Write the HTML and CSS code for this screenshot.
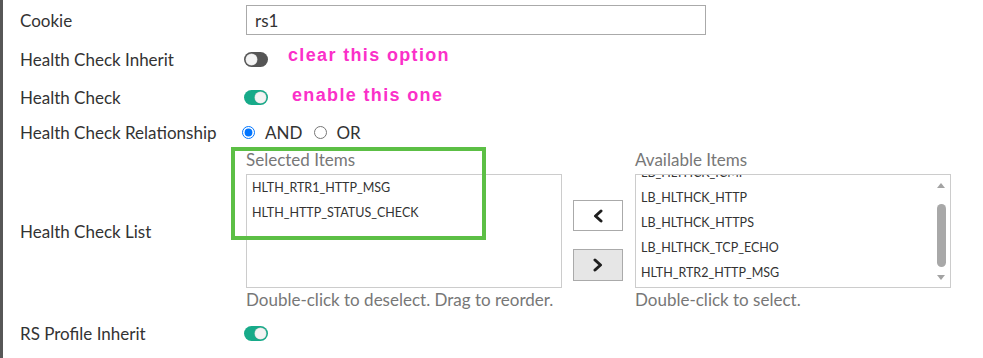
FILE: index.html
```html
<!DOCTYPE html>
<html>
<head>
<meta charset="utf-8">
<link rel="stylesheet" href="styles.css">
</head>
<body>
<div class="page">
  <div class="row row-cookie">
    <div class="label">Cookie</div>
    <div class="field"><input class="text-input" type="text" value="rs1"></div>
  </div>
  <div class="row row-toggle">
    <div class="label">Health Check Inherit</div>
    <div class="field"><span class="toggle"><span class="knob"></span></span></div>
  </div>
  <div class="row row-toggle">
    <div class="label">Health Check</div>
    <div class="field"><span class="toggle on"><span class="knob"></span></span></div>
  </div>
  <div class="row row-rel">
    <div class="label">Health Check Relationship</div>
    <div class="field radios">
      <label class="radio"><input type="radio" name="rel" checked><span>AND</span></label>
      <label class="radio"><input type="radio" name="rel"><span>OR</span></label>
    </div>
  </div>
  <div class="row row-list">
    <div class="label">Health Check List</div>
    <div class="field lists">
      <div class="list-col">
        <div class="list-head">Selected Items</div>
        <div class="list-box">
          <div class="items">
            <div class="item">HLTH_RTR1_HTTP_MSG</div>
            <div class="item">HLTH_HTTP_STATUS_CHECK</div>
          </div>
        </div>
        <div class="list-hint">Double-click to deselect. Drag to reorder.</div>
      </div>
      <div class="move-btns">
        <button class="move-btn" type="button"><svg width="12" height="14" viewBox="0 0 12 14"><polyline points="9,2 3.5,7 9,12" fill="none" stroke="#1e1e1e" stroke-width="3" stroke-linecap="round" stroke-linejoin="round"/></svg></button>
        <button class="move-btn alt" type="button"><svg width="12" height="14" viewBox="0 0 12 14"><polyline points="3,2 8.5,7 3,12" fill="none" stroke="#1e1e1e" stroke-width="3" stroke-linecap="round" stroke-linejoin="round"/></svg></button>
      </div>
      <div class="list-col">
        <div class="list-head">Available Items</div>
        <div class="list-box scrolling">
          <div class="items scrolled">
            <div class="item">LB_HLTHCK_ICMP</div>
            <div class="item">LB_HLTHCK_HTTP</div>
            <div class="item">LB_HLTHCK_HTTPS</div>
            <div class="item">LB_HLTHCK_TCP_ECHO</div>
            <div class="item">HLTH_RTR2_HTTP_MSG</div>
          </div>
          <div class="scrollbar">
            <span class="arrow up"></span>
            <span class="thumb"></span>
            <span class="arrow down"></span>
          </div>
        </div>
        <div class="list-hint">Double-click to select.</div>
      </div>
    </div>
  </div>
  <div class="row row-last">
    <div class="label">RS Profile Inherit</div>
    <div class="field"><span class="toggle on"><span class="knob"></span></span></div>
  </div>

  <div class="note note-clear">clear this option</div>
  <div class="note note-enable">enable this one</div>
  <div class="highlight"></div>
</div>
</body>
</html>
```

FILE: styles.css
```css
* { box-sizing: border-box; }
html, body { margin: 0; padding: 0; background: #fff; }
body {
  font-family: Lato, "Open Sans", "Liberation Sans", sans-serif;
  font-size: 17px;
  color: #333;
}
.page {
  position: relative;
  width: 983px;
  height: 358px;
  border-left: 3px solid #575757;
  padding-left: 17px;
  overflow: hidden;
}
.row { display: flex; align-items: center; }
.label { width: 226px; flex: none; }
.field { display: flex; align-items: center; }

.row-cookie { height: 40px; }
.row-toggle { height: 38px; }
.row-rel { height: 32px; }
.row-list { height: 164px; padding-top: 2px; }
.row-last { height: 42px; }

.text-input {
  width: 460px;
  height: 30px;
  border: 1px solid #aaa;
  padding: 0 8px;
  font-family: Lato, sans-serif;
  font-size: 17px;
  color: #333;
  outline: none;
}

.toggle {
  display: inline-flex;
  align-items: center;
  width: 24px;
  height: 15px;
  border-radius: 8px;
  background: #555;
  padding: 0 2px;
  margin-left: -2px;
}
.toggle .knob {
  width: 11px;
  height: 11px;
  border-radius: 50%;
  background: #f4f4f4;
  box-shadow: 0 0 0 0.5px #ccc;
}
.toggle.on { background: #17aa89; justify-content: flex-end; }

.radio { display: inline-flex; align-items: center; margin-right: 12px; }
.radio input {
  margin: 0 10px 0 -4px;
  width: 13px;
  height: 13px;
}
.radio + .radio input { margin-left: 0; margin-right: 9px; }

.lists { align-items: flex-start; }
.list-col { width: 316px; display: flex; flex-direction: column; }
.list-head { line-height: 20px; color: #777; }
.list-box {
  margin-top: 4px;
  height: 114px;
  border: 1px solid #ccc;
  overflow: hidden;
  display: flex;
}
.items { flex: 1; padding-left: 5px; }
.items.scrolled { margin-top: -15px; }
.item {
  height: 25px;
  line-height: 25px;
  font-size: 12.5px;
  color: #333;
  white-space: nowrap;
}
.list-hint { line-height: 24px; color: #777; }

.scrollbar {
  width: 16px;
  flex: none;
  display: flex;
  flex-direction: column;
  align-items: center;
  padding-top: 8px;
  padding-right: 2px;
}
.arrow { width: 0; height: 0; border-left: 4.5px solid transparent; border-right: 4.5px solid transparent; }
.arrow.up { border-bottom: 5px solid #a3a3a3; }
.arrow.down { border-top: 5px solid #a3a3a3; }
.thumb {
  width: 9px;
  height: 63px;
  border-radius: 5px;
  background: #a8a8a8;
  margin: 16px 0 8px;
}

.move-btns {
  display: flex;
  flex-direction: column;
  gap: 18px;
  padding-top: 50px;
  margin: 0 12px 0 11px;
}
.move-btn {
  width: 50px;
  height: 31px;
  border: 1px solid #aaa;
  background: #fff;
  padding: 0;
  display: flex;
  align-items: center;
  justify-content: center;
}
.move-btn.alt { height: 32px; background: #e6e6e6; }

.note {
  position: absolute;
  font-family: "Liberation Sans", Arial, sans-serif;
  font-weight: bold;
  font-size: 18px;
  letter-spacing: 1.35px;
  color: #fb30c9;
  line-height: 20px;
  white-space: nowrap;
}
.note-clear { left: 285px; top: 45px; }
.note-enable { left: 289px; top: 85px; }

.highlight {
  position: absolute;
  left: 228px;
  top: 147px;
  width: 255px;
  height: 93px;
  border: 4px solid #5cbf45;
}
```
